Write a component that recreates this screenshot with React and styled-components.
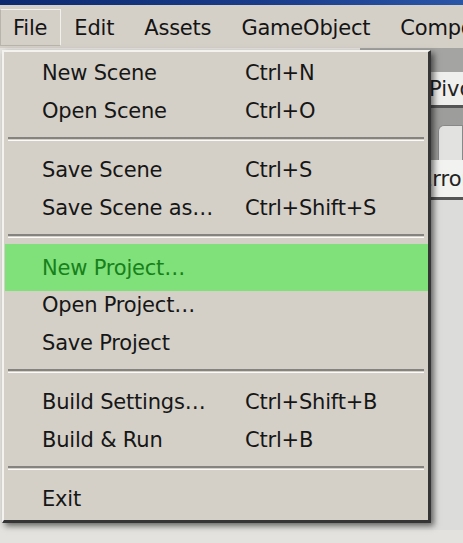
import React from "react";
import styled, { createGlobalStyle } from "styled-components";

const Global = createGlobalStyle`
  html, body { margin: 0; padding: 0; background: #d4d0c8; }
  body { font-family: "DejaVu Sans", sans-serif; }
`;

const Page = styled.div`
  width: 463px;
  height: 543px;
  overflow: hidden;
  display: flex;
  flex-direction: column;
  background: #d4d0c8;
  font-family: "DejaVu Sans", "Noto Sans", sans-serif;
`;

const TitleStrip = styled.div`
  height: 5px;
  flex: none;
  background: linear-gradient(90deg, #0c2a70 0%, #1a3d8c 60%, #2a56a8 100%);
`;

const MenuBar = styled.div`
  height: 43px;
  flex: none;
  display: flex;
  align-items: center;
  background: #d4d0c8;
  white-space: nowrap;
  overflow: hidden;
`;

const MenuTitle = styled.div`
  height: 37px;
  flex: none;
  box-sizing: border-box;
  display: flex;
  align-items: center;
  padding: 0 ${(p) => p.$pr}px 0 ${(p) => p.$pl}px;
  font-size: 21px;
  color: #141414;
  letter-spacing: -0.2px;
  border: 1px solid ${(p) => (p.$open ? "#f2f0ec" : "transparent")};
  border-left-color: ${(p) => (p.$open ? "#b8b4ac" : "transparent")};
  border-bottom-color: ${(p) => (p.$open ? "#b8b4ac" : "transparent")};
  margin-top: 2px;
`;

const Workspace = styled.div`
  position: relative;
  flex: 1;
  display: flex;
  flex-direction: column;
  background: #e3e2de;
`;

const PanelStack = styled.div`
  margin-left: 360px;
  display: flex;
  flex-direction: column;
  font-size: 21px;
  color: #222;
`;

const Strip = styled.div`
  height: ${(p) => p.$h}px;
  flex: none;
  background: ${(p) => p.$bg};
  border-bottom: ${(p) => (p.$line ? "3px solid #555" : "none")};
  display: flex;
  align-items: center;
  padding-left: ${(p) => p.$indent || 0}px;
  overflow: hidden;
  white-space: nowrap;
`;

const TabStub = styled.div`
  height: ${(p) => p.$h}px;
  flex: none;
  background: #9d9d9b;
  display: flex;
  align-items: flex-end;
  padding-left: 78px;
`;

const TabShape = styled.div`
  width: 30px;
  height: 34px;
  background: #e2e2e0;
  border-top-left-radius: 6px;
  border: 1px solid #888;
  border-bottom: none;
`;

const Dropdown = styled.div`
  position: absolute;
  left: 2px;
  top: 2px;
  width: 429px;
  box-sizing: border-box;
  background: #d4d0c8;
  border-top: 2px solid #f4f2ee;
  border-left: 2px solid #f4f2ee;
  border-right: 3px solid #353535;
  border-bottom: 3px solid #353535;
  box-shadow: 3px 3px 6px rgba(0, 0, 0, 0.55);
  padding: 2px 0 2px 0;
  display: flex;
  flex-direction: column;
`;

const Item = styled.div`
  height: ${(p) => (p.$active ? 47 : 38)}px;
  margin: ${(p) => (p.$active ? "-4px 0 -5px 1px" : "0 0 0 1px")};
  display: grid;
  grid-template-columns: 203px 1fr;
  align-items: center;
  padding-left: 37px;
  background: ${(p) => (p.$active ? "#80e07a" : "transparent")};
  color: ${(p) => (p.$active ? "#17811a" : "#161616")};
  font-size: 21px;
  letter-spacing: -0.2px;
  white-space: nowrap;
`;

const Label = styled.span``;
const Shortcut = styled.span``;

const Separator = styled.div`
  padding: 7px 4px 10px 4px;
  &::after {
    content: "";
    display: block;
    height: 1px;
    border-top: 2px solid #858380;
    border-bottom: 1px solid #fbfaf8;
  }
`;

const groups = [
  [
    ["New Scene", "Ctrl+N"],
    ["Open Scene", "Ctrl+O"],
  ],
  [
    ["Save Scene", "Ctrl+S"],
    ["Save Scene as…", "Ctrl+Shift+S"],
  ],
  [
    ["New Project…", "", true],
    ["Open Project…", ""],
    ["Save Project", ""],
  ],
  [
    ["Build Settings…", "Ctrl+Shift+B"],
    ["Build & Run", "Ctrl+B"],
  ],
  [["Exit", ""]],
];

export default function App() {
  return (
    <Page>
      <Global />
      <TitleStrip />
      <MenuBar>
        <MenuTitle $open $pl={12} $pr={13}>File</MenuTitle>
        <MenuTitle $pl={12} $pr={14}>Edit</MenuTitle>
        <MenuTitle $pl={14} $pr={14}>Assets</MenuTitle>
        <MenuTitle $pl={14} $pr={14}>GameObject</MenuTitle>
        <MenuTitle $pl={14} $pr={0}>Component</MenuTitle>
      </MenuBar>
      <Workspace>
        <PanelStack>
          <Strip $h={24} $bg="#a4a4a2" />
          <Strip $h={33} $bg="#efefed" $line $indent={69}>Pivot</Strip>
          <TabStub $h={52}>
            <TabShape />
          </TabStub>
          <Strip $h={37} $bg="#f2f2f0" $line $indent={59}>Errors</Strip>
          <Strip $h={330} $bg="#dcdcda" />
        </PanelStack>
        <Dropdown>
          {groups.map((g, gi) => (
            <React.Fragment key={gi}>
              {gi > 0 && <Separator />}
              {g.map(([label, sc, active]) => (
                <Item key={label} $active={active}>
                  <Label>{label}</Label>
                  <Shortcut>{sc}</Shortcut>
                </Item>
              ))}
            </React.Fragment>
          ))}
        </Dropdown>
      </Workspace>
    </Page>
  );
}
